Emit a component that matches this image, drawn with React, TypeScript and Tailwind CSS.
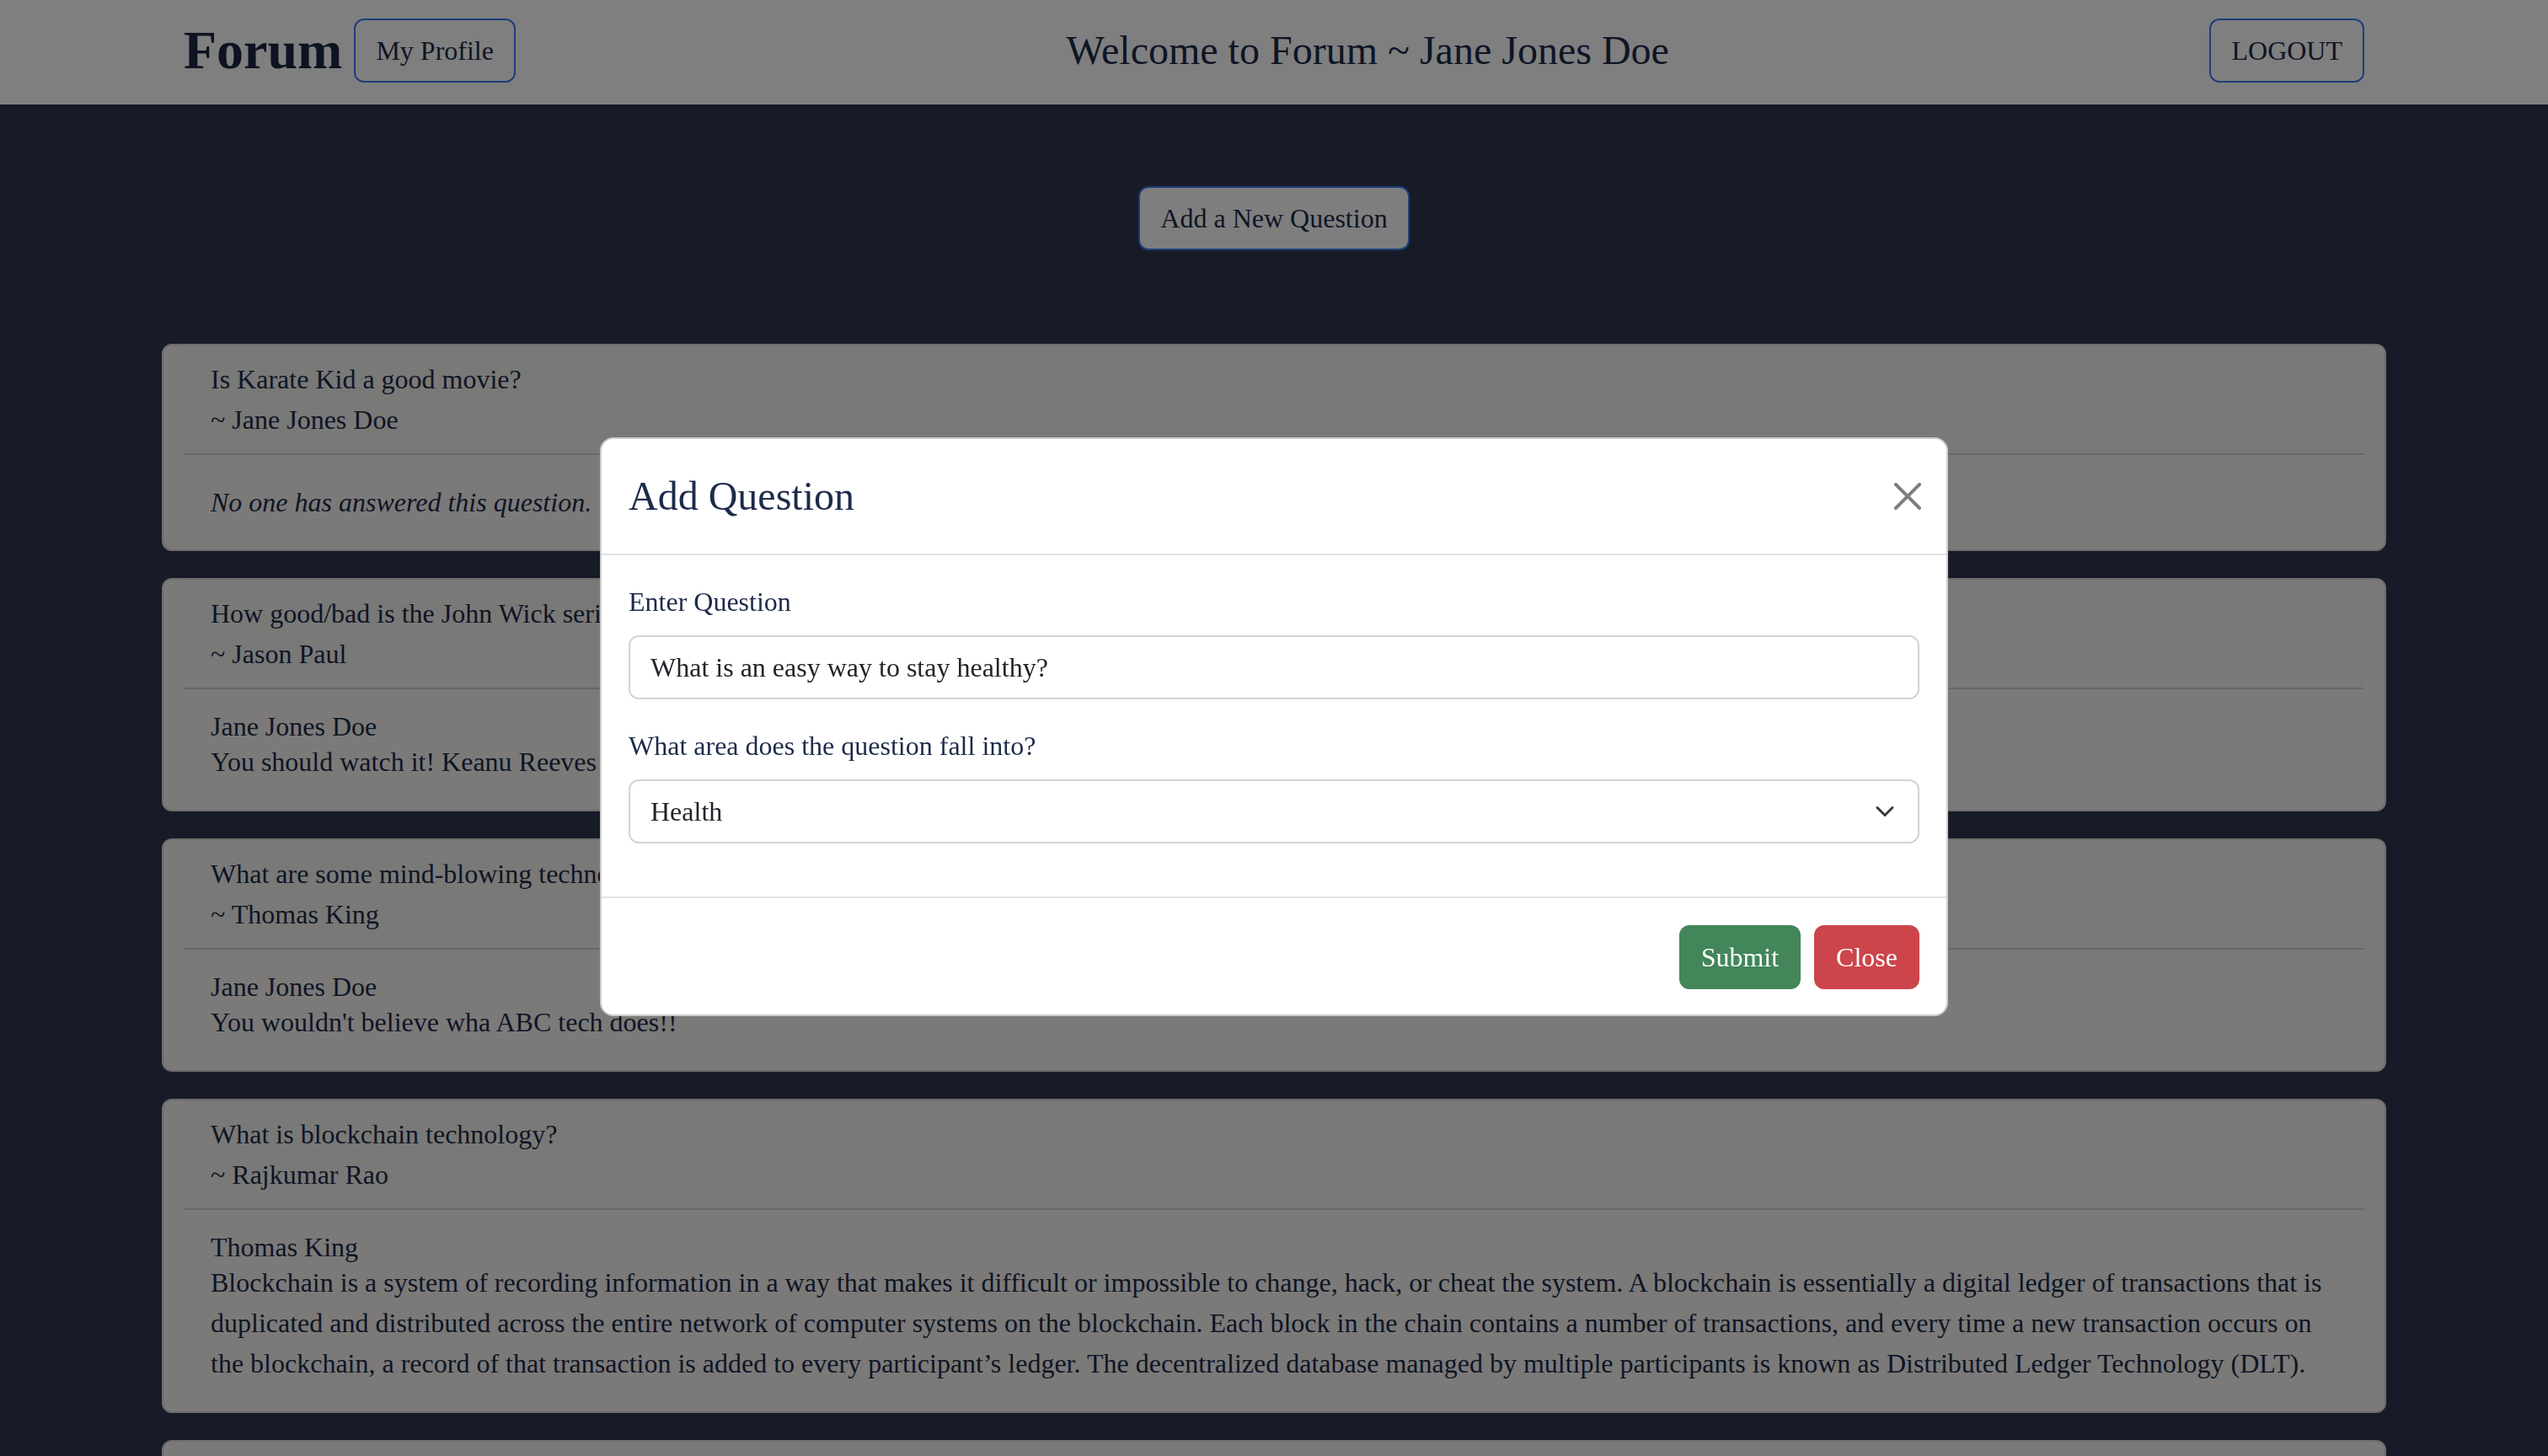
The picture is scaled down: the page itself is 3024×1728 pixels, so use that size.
import React from 'react'

type Answer = { author: string; text: string }
type Question = { question: string; author: string; answers: Answer[] }

const questions: Question[] = [
  { question: 'Is Karate Kid a good movie?', author: 'Jane Jones Doe', answers: [] },
  {
    question: 'How good/bad is the John Wick series?',
    author: 'Jason Paul',
    answers: [{ author: 'Jane Jones Doe', text: 'You should watch it! Keanu Reeves is great.' }],
  },
  {
    question: 'What are some mind-blowing technologies?',
    author: 'Thomas King',
    answers: [{ author: 'Jane Jones Doe', text: "You wouldn't believe wha ABC tech does!!" }],
  },
  {
    question: 'What is blockchain technology?',
    author: 'Rajkumar Rao',
    answers: [
      {
        author: 'Thomas King',
        text: 'Blockchain is a system of recording information in a way that makes it difficult or impossible to change, hack, or cheat the system. A blockchain is essentially a digital ledger of transactions that is duplicated and distributed across the entire network of computer systems on the blockchain. Each block in the chain contains a number of transactions, and every time a new transaction occurs on the blockchain, a record of that transaction is added to every participant\u2019s ledger. The decentralized database managed by multiple participants is known as Distributed Ledger Technology (DLT).',
      },
    ],
  },
  { question: 'Which programming language should I learn first?', author: 'Jason Paul', answers: [] },
]

function QuestionCard({ q }: { q: Question }) {
  return (
    <div className="mb-[32px] rounded-[12px] border-2 border-[#dcdbd8] bg-[#f6f5f2] px-[24px]">
      <div className="border-b-2 border-[#d2d1ce] bg-[#f3f2ef] px-[32px] py-[16px] leading-[48px]">
        <div>{q.question}</div>
        <div>~ {q.author}</div>
      </div>
      {q.answers.length === 0 ? (
        <div className="p-[32px]">
          <p className="italic leading-[48px]">No one has answered this question.</p>
        </div>
      ) : (
        <div className="px-[32px] pt-[26px] pb-[33px]">
          {q.answers.map((a, i) => (
            <div key={i}>
              <div className="leading-[36px]">{a.author}</div>
              <div className="leading-[48px]">{a.text}</div>
            </div>
          ))}
        </div>
      )}
    </div>
  )
}

function AddQuestionModal() {
  return (
    <div className="fixed inset-0 flex items-center justify-center bg-black/50 pb-[4px]">
      <div className="w-[1600px] rounded-[16px] border-2 border-black/20 bg-white text-[#1d2b4a]">
        <div className="flex items-center justify-between border-b-2 border-[#dee2e6] p-[32px]">
          <h4 className="text-[48px] leading-[72px]">Add Question</h4>
          <button className="mr-[-2px] flex h-[32px] w-[32px] items-center justify-center">
            <svg viewBox="0 0 16 16" className="h-[32px] w-[32px] opacity-50">
              <path
                fill="#000"
                d="M.293.293a1 1 0 0 1 1.414 0L8 6.586 14.293.293a1 1 0 1 1 1.414 1.414L9.414 8l6.293 6.293a1 1 0 0 1-1.414 1.414L8 9.414l-6.293 6.293a1 1 0 0 1-1.414-1.414L6.586 8 .293 1.707a1 1 0 0 1 0-1.414"
              />
            </svg>
          </button>
        </div>

        <div className="px-[32px] pt-[31px] pb-[32px]">
          <div className="mb-[31px]">
            <label className="mb-[16px] block text-[32px] leading-[48px]">Enter Question</label>
            <div className="flex h-[76px] items-center rounded-[12px] border-2 border-[#ced4da] px-[24px] text-[32px] text-[#212529]">
              What is an easy way to stay healthy?
            </div>
          </div>
          <div className="mb-[31px]">
            <label className="mb-[16px] block text-[32px] leading-[48px]">What area does the question fall into?</label>
            <div className="flex h-[76px] items-center justify-between rounded-[12px] border-2 border-[#ced4da] pl-[24px] pr-[27px] text-[32px] text-[#212529]">
              <span>Health</span>
              <svg viewBox="0 0 16 16" className="h-[24px] w-[24px]" fill="none">
                <path d="m2 5 6 6 6-6" stroke="#343a40" strokeWidth="2" strokeLinecap="round" strokeLinejoin="round" />
              </svg>
            </div>
          </div>
        </div>

        <div className="flex justify-end gap-[16px] border-t-2 border-[#dee2e6] px-[32px] pt-[32px] pb-[30px]">
          <button className="rounded-[12px] border-2 border-[#42865a] bg-[#42865a] px-[24px] py-[12px] text-[32px] leading-[48px] text-white">
            Submit
          </button>
          <button className="rounded-[12px] border-2 border-[#cc454b] bg-[#cc454b] px-[24px] py-[12px] text-[32px] leading-[48px] text-white">
            Close
          </button>
        </div>
      </div>
    </div>
  )
}

export default function App() {
  return (
    <div className="min-h-screen bg-[#2f3650] font-['Liberation_Serif',serif] text-[32px] text-[#1d2b4a]">
      <nav className="flex h-[124px] items-center justify-between bg-white px-[218px] pb-[4px]">
        <div className="flex items-center gap-[14px]">
          <span className="text-[64px] font-bold leading-none text-[#1a2642]">Forum</span>
          <button className="rounded-[12px] border-2 border-[#3c7cf8] px-[24px] py-[12px] leading-[48px]">
            My Profile
          </button>
        </div>
        <h3 className="ml-[12px] text-[48px] leading-[72px]">Welcome to Forum ~ Jane Jones Doe</h3>
        <button className="rounded-[12px] border-2 border-[#3c7cf8] px-[24px] py-[12px] leading-[48px]">LOGOUT</button>
      </nav>

      <main className="flex flex-col items-center">
        <button className="mt-[97px] rounded-[12px] border-2 border-[#3c7cf8] bg-[#fcfcfc] px-[24px] py-[12px] leading-[48px]">
          Add a New Question
        </button>
        <div className="mt-[111px] w-[2640px]">
          {questions.map((q, i) => (
            <QuestionCard key={i} q={q} />
          ))}
        </div>
      </main>

      <AddQuestionModal />
    </div>
  )
}
